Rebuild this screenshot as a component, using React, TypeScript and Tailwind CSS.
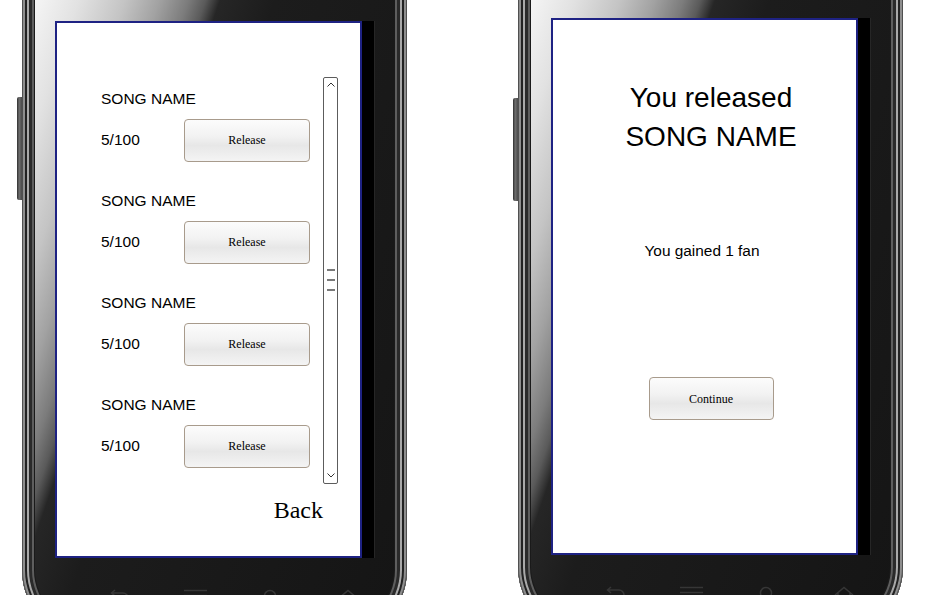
import React from "react";

const sans = "font-['Liberation_Sans',Arial,sans-serif]";
const serif = "font-['Liberation_Serif','Times_New_Roman',serif]";

const songs = [
  { name: "SONG NAME", progress: "5/100" },
  { name: "SONG NAME", progress: "5/100" },
  { name: "SONG NAME", progress: "5/100" },
  { name: "SONG NAME", progress: "5/100" },
];

const GlossButton: React.FC<{ label: string; className: string }> = ({ label, className }) => (
  <div
    className={`flex shrink-0 items-center justify-center rounded-[4px] border border-[#a89b8c] bg-[linear-gradient(to_bottom,#fcfcfc_0%,#f2f2f2_40%,#e7e7e7_62%,#f4f4f4_100%)] ${serif} text-[12px] text-black ${className}`}
  >
    {label}
  </div>
);

const Chevron: React.FC<{ up?: boolean }> = ({ up }) => (
  <svg width="8" height="5" viewBox="0 0 8 5" className="shrink-0">
    <polyline
      points={up ? "0.5,4.5 4,1 7.5,4.5" : "0.5,0.5 4,4 7.5,0.5"}
      fill="none"
      stroke="#333"
      strokeWidth="1"
    />
  </svg>
);

const Scrollbar: React.FC = () => (
  <div className="ml-[13px] flex h-[407px] w-[15px] shrink-0 flex-col items-center rounded-[2px] border-[1.5px] border-[#5c5c5c] bg-white">
    <div className="mt-[4px]">
      <Chevron up />
    </div>
    {/* grip */}
    <div className="mt-[182px] flex flex-col gap-[8px]">
      <div className="h-[2px] w-[8px] bg-[#7a7a7a]" />
      <div className="h-[2px] w-[8px] bg-[#7a7a7a]" />
      <div className="h-[2px] w-[8px] bg-[#7a7a7a]" />
    </div>
    <div className="mb-[5px] mt-auto">
      <Chevron />
    </div>
  </div>
);

const NavKeys: React.FC = () => (
  <div className="mt-[31px] flex items-start">
    <svg width="20" height="16" viewBox="0 0 20 16" className="ml-[55px]" fill="none" stroke="#363636" strokeWidth="1.5">
      <path d="M5 7 L1.5 4 L5 1 M1.5 4 H13 A5 5 0 0 1 13 14 H8" />
    </svg>
    <svg width="25" height="14" viewBox="0 0 25 14" className="ml-[53px]" fill="none" stroke="#363636" strokeWidth="1.5">
      <path d="M1 1.5 H24 M1 6.5 H24 M1 11.5 H24" />
    </svg>
    <svg width="14" height="16" viewBox="0 0 14 16" className="ml-[55px]" fill="none" stroke="#363636" strokeWidth="1.5">
      <circle cx="7" cy="7" r="5.5" />
    </svg>
    <svg width="20" height="14" viewBox="0 0 20 14" className="ml-[61px]" fill="none" stroke="#363636" strokeWidth="1.5">
      <path d="M1 9 L10 1.5 L19 9 M4 7 V14 M16 7 V14" />
    </svg>
  </div>
);

const Phone: React.FC<{ rimTop: string; buttonTop: string; children: React.ReactNode }> = ({
  rimTop,
  buttonTop,
  children,
}) => (
  <div className="flex shrink-0 items-start">
    {/* side key */}
    <div
      className={`${buttonTop} h-[103px] w-[5px] rounded-l-[2px] bg-[linear-gradient(to_right,#2e2e2e,#6e6e6e_45%,#4a4a4a)]`}
    />
    {/* chrome rim */}
    <div
      className={`${rimTop} h-[660px] w-[385px] shrink-0 rounded-b-[70px] bg-[#1a1a1a] p-[13px] shadow-[inset_0_0_0_1px_#505050,inset_0_0_0_3px_#8e8e8e,inset_0_0_0_5px_#222,inset_0_0_0_7px_#a9a9a9,inset_0_0_0_10px_#2a2a2a,inset_0_0_0_12px_#5e5e5e]`}
    >
      {/* glossy bezel */}
      <div className="flex h-full flex-col rounded-b-[58px] bg-[linear-gradient(109deg,#f6f6f6_0%,#e2e2e2_8%,#c4c4c4_16%,#a2a2a2_22%,#7c7c7c_27%,#5a5a5a_30%,#262626_32.5%,#1c1c1c_42%,#151515_100%)] pl-[20px] pr-[19px] pt-[28px]">
        <div className="flex h-[537px]">
          <div className="w-[307px] shrink-0 border-2 border-[#1e2283] bg-white">{children}</div>
          <div className="flex-1 border-r border-[#262626] bg-black" />
        </div>
        <NavKeys />
      </div>
    </div>
  </div>
);

const SongList: React.FC = () => (
  <div className={`flex h-full flex-col pl-[44px] pt-[54px] ${sans} text-black`}>
    <div className="flex items-start">
      <div className="w-[209px] pt-[13px]">
        {songs.map((song, i) => (
          <div key={i} className="pb-[31px] last:pb-0">
            <div className="h-[18px] text-[15.5px] leading-[18px]">{song.name}</div>
            <div className="mt-[11px] flex h-[42px] items-center justify-between">
              <span className="text-[15.5px]">{song.progress}</span>
              <GlossButton label="Release" className="h-[43px] w-[126px]" />
            </div>
          </div>
        ))}
      </div>
      <Scrollbar />
    </div>
    <div className={`mt-[12px] w-[222px] text-right ${serif} text-[24px] leading-[28px]`}>Back</div>
  </div>
);

const Released: React.FC = () => (
  <div className={`flex h-full flex-col items-center pt-[58px] ${sans} text-black`}>
    <div className="pl-[13px] text-center text-[28px] leading-[39px]">
      <div>You released</div>
      <div>SONG NAME</div>
    </div>
    <div className="mt-[86px] pr-[5px] text-[15.4px] leading-[18px]">You gained 1 fan</div>
    <div className="mt-[117px] pl-[13px]">
      <GlossButton label="Continue" className="h-[43px] w-[125px]" />
    </div>
  </div>
);

export default function App() {
  return (
    <div className="h-[595px] w-[942px] overflow-hidden bg-white">
      <div className="flex items-start gap-[106px] pl-[17px]">
        <Phone rimTop="-mt-[20px]" buttonTop="mt-[97px]">
          <SongList />
        </Phone>
        <Phone rimTop="-mt-[23px]" buttonTop="mt-[98px]">
          <Released />
        </Phone>
      </div>
    </div>
  );
}
